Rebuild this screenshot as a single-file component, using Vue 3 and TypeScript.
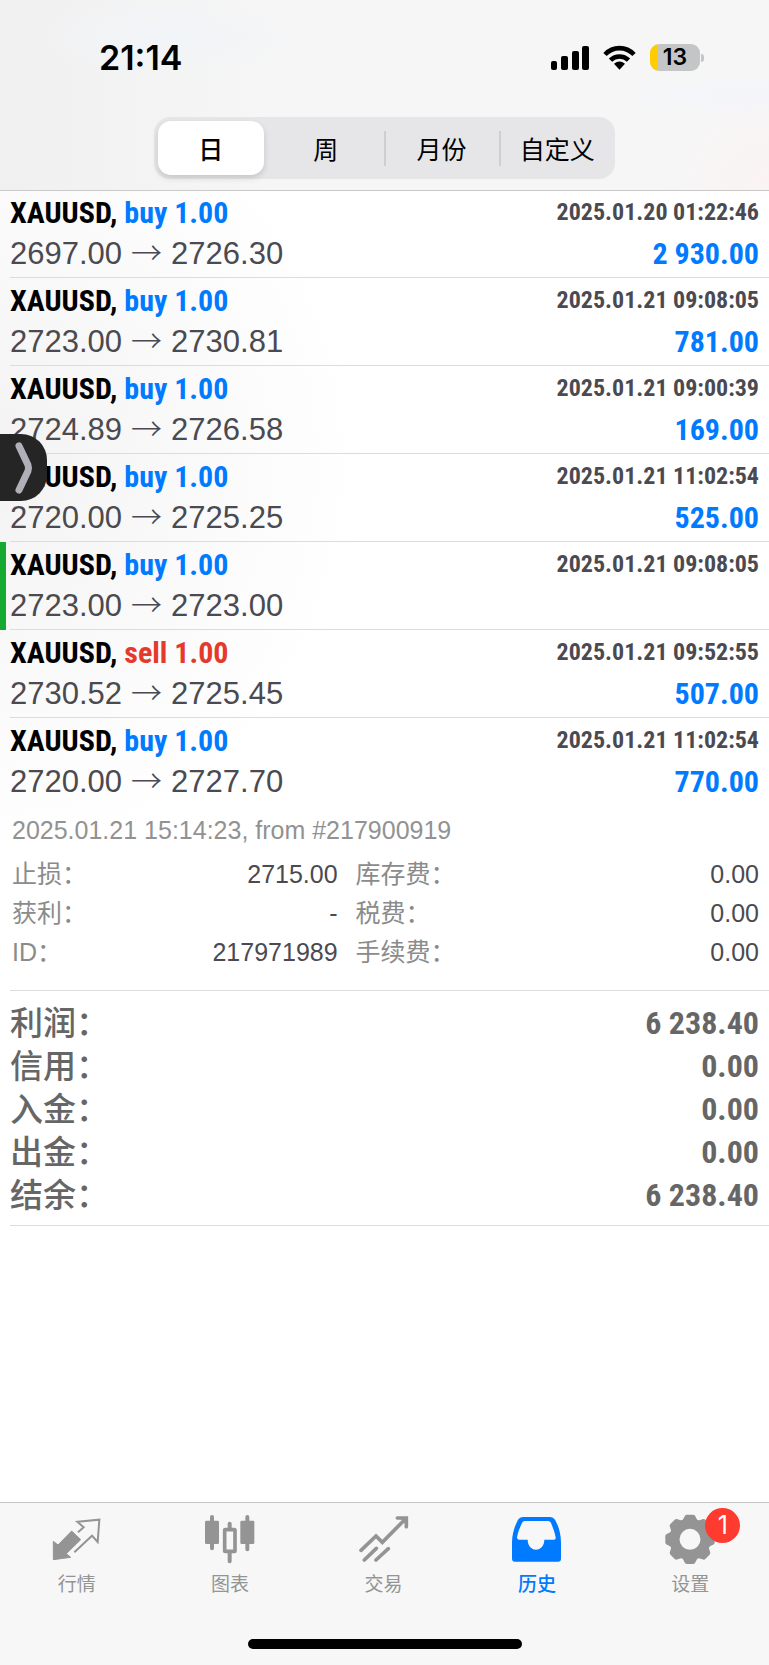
<script setup lang="ts">
import { ref } from 'vue'

interface Deal {
  symbol: string
  side: 'buy' | 'sell'
  volume: string
  open: string
  close: string
  time: string
  profit: string
  takeProfit?: boolean
}

const periods = ['日', '周', '月份', '自定义']
const period = ref('日')

const deals: Deal[] = [
  { symbol: 'XAUUSD', side: 'buy', volume: '1.00', open: '2697.00', close: '2726.30', time: '2025.01.20 01:22:46', profit: '2 930.00' },
  { symbol: 'XAUUSD', side: 'buy', volume: '1.00', open: '2723.00', close: '2730.81', time: '2025.01.21 09:08:05', profit: '781.00' },
  { symbol: 'XAUUSD', side: 'buy', volume: '1.00', open: '2724.89', close: '2726.58', time: '2025.01.21 09:00:39', profit: '169.00' },
  { symbol: 'XAUUSD', side: 'buy', volume: '1.00', open: '2720.00', close: '2725.25', time: '2025.01.21 11:02:54', profit: '525.00' },
  { symbol: 'XAUUSD', side: 'buy', volume: '1.00', open: '2723.00', close: '2723.00', time: '2025.01.21 09:08:05', profit: '', takeProfit: true },
  { symbol: 'XAUUSD', side: 'sell', volume: '1.00', open: '2730.52', close: '2725.45', time: '2025.01.21 09:52:55', profit: '507.00' },
  { symbol: 'XAUUSD', side: 'buy', volume: '1.00', open: '2720.00', close: '2727.70', time: '2025.01.21 11:02:54', profit: '770.00' },
]

const details = [
  ['止损：', '2715.00', '库存费：', '0.00'],
  ['获利：', '-', '税费：', '0.00'],
  ['ID：', '217971989', '手续费：', '0.00'],
]

const totals = [
  ['利润：', '6 238.40'],
  ['信用：', '0.00'],
  ['入金：', '0.00'],
  ['出金：', '0.00'],
  ['结余：', '6 238.40'],
]

const teeth = [0, 45, 90, 135, 180, 225, 270, 315]
</script>

<template>
  <div class="screen">
    <header class="top">
      <div class="status">
        <span class="clock">21:14</span>
        <div class="indicators">
          <svg class="signal" viewBox="0 0 38 24" aria-hidden="true">
            <rect x="0" y="15" width="6" height="9" rx="2" />
            <rect x="10" y="10" width="7" height="14" rx="2" />
            <rect x="21" y="5" width="7" height="19" rx="2" />
            <rect x="31" y="0" width="7" height="24" rx="2" />
          </svg>
          <svg class="wifi" viewBox="0 0 33 25" aria-hidden="true">
            <path d="M2 9.5C10 1 23 1 31 9.500M7.500 15.200C12.500 10.200 20.500 10.200 25.500 15.200" fill="none" stroke="#000" stroke-width="4.600" />
            <path d="M11 18.700Q16.500 14.500 22 18.700L16.500 24.700Z" />
          </svg>
          <div class="battery"><span class="cell">13</span><span class="tip"></span></div>
        </div>
      </div>
      <nav class="segments">
        <button
          v-for="item in periods"
          :key="item"
          type="button"
          class="segment"
          :class="{ active: item === period }"
          @click="period = item"
        >{{ item }}</button>
      </nav>
    </header>

    <main class="content">
      <ul class="deals">
        <li v-for="(deal, i) in deals" :key="i" class="deal" :class="{ marked: deal.takeProfit }">
          <div class="line">
            <span class="title">{{ deal.symbol }}, <span :class="deal.side">{{ deal.side }} {{ deal.volume }}</span></span>
            <time class="time">{{ deal.time }}</time>
          </div>
          <div class="line">
            <span class="prices">{{ deal.open }}<span class="arrow">→</span>{{ deal.close }}</span>
            <span class="profit">{{ deal.profit }}</span>
          </div>
        </li>
      </ul>

      <section class="details">
        <p class="origin">2025.01.21 15:14:23, from #217900919</p>
        <table class="grid">
          <tbody>
            <tr v-for="row in details" :key="row[0]">
              <th scope="row">{{ row[0] }}</th>
              <td class="first">{{ row[1] }}</td>
              <th scope="row">{{ row[2] }}</th>
              <td>{{ row[3] }}</td>
            </tr>
          </tbody>
        </table>
      </section>

      <dl class="totals">
        <div v-for="row in totals" :key="row[0]" class="total">
          <dt>{{ row[0] }}</dt>
          <dd>{{ row[1] }}</dd>
        </div>
      </dl>

      <button type="button" class="handle" aria-label="展开">
        <svg viewBox="0 0 46 67" aria-hidden="true">
          <path d="M19 12L28 31Q29 34 28 37L19 56" fill="none" stroke="#b1b0b9" stroke-width="7" stroke-linecap="round" stroke-linejoin="round" />
        </svg>
      </button>
    </main>

    <footer class="bottom">
      <nav class="tabs">
        <a href="#quotes" class="tab">
          <svg viewBox="0 0 150 150" aria-hidden="true">
            <path d="M4 82L18 93L59 51L86 77L43 119L56 130L4 137Z" stroke="currentColor" stroke-width="3" stroke-linejoin="round" />
            <path d="M78 55L95 40L76 23L142 17L137 84L120 65L67 115" fill="none" stroke="currentColor" stroke-width="6" />
          </svg>
          <span>行情</span>
        </a>
        <a href="#charts" class="tab">
          <svg viewBox="0 0 150 150" aria-hidden="true">
            <rect x="0" y="20" width="42" height="70" rx="4" />
            <rect x="106" y="20" width="42" height="70" rx="4" />
            <path d="M21 9V103M127 9V106M74 29V46M74 118V142" stroke="currentColor" stroke-width="12" stroke-linecap="round" />
            <rect x="59" y="47" width="31" height="65" rx="2" fill="none" stroke="currentColor" stroke-width="11" />
          </svg>
          <span>图表</span>
        </a>
        <a href="#trade" class="tab">
          <svg viewBox="0 0 150 150" aria-hidden="true">
            <path d="M6 109L51 66L70 85L140 14M115 12H142V38M16 138L52 103M51 138L88 104" fill="none" stroke="currentColor" stroke-width="11" stroke-linecap="round" />
            <path d="M122 12H142V32Z" />
          </svg>
          <span>交易</span>
        </a>
        <a href="#history" class="tab current">
          <svg viewBox="0 0 150 150" aria-hidden="true">
            <path fill-rule="evenodd" d="M0 85C0 58 10 32 18 17Q23 9 32 9H115Q124 9 129 17C138 32 147 58 147 85V134Q147 143 138 143H9Q0 143 0 134ZM38 21Q31 21 29 29C23 42 18 54 15 70Q15 77 21 77H47C47 94 58 107 72 107S97 94 97 77H126Q132 77 131 70C128 54 123 42 118 29Q116 21 109 21Z" />
          </svg>
          <span>历史</span>
        </a>
        <a href="#settings" class="tab">
          <span class="badged">
            <svg viewBox="0 0 150 150" aria-hidden="true">
              <circle cx="75" cy="76" r="47" fill="none" stroke="currentColor" stroke-width="31" />
              <path v-for="angle in teeth" :key="angle" d="M50 24L60 5Q62 2 66 2H84Q88 2 90 5L100 24Z" :transform="`rotate(${angle} 75 76)`" />
            </svg>
            <span class="badge">1</span>
          </span>
          <span>设置</span>
        </a>
      </nav>
      <div class="home"></div>
    </footer>
  </div>
</template>

<style>
body {
  margin: 0;
  background: #fff;
}
</style>

<style scoped>
.screen {
  min-height: 100vh;
  display: flex;
  flex-direction: column;
  font-family: "Liberation Sans", "Noto Sans CJK SC", sans-serif;
  color: #4a4a50;
}
.top {
  height: 190px;
  border-bottom: 1px solid #c9c9ca;
  background:
    radial-gradient(circle at 100% 100%, #faf3f3, transparent 110px),
    radial-gradient(ellipse at 100% 50%, #f2f5fa, transparent 180px),
    radial-gradient(ellipse at 22% 20%, #f1f4f8, transparent 150px),
    linear-gradient(90deg, #f0f0f0, #f6f6f6 35%);
}
.status {
  height: 115px;
  display: flex;
  align-items: center;
  justify-content: space-between;
  padding: 0 65px 0 99px;
  box-sizing: border-box;
  color: #000;
  font-family: Inter, sans-serif;
}
.clock {
  font-size: 34px;
  font-weight: 600;
  line-height: 40px;
}
.indicators {
  display: flex;
  align-items: center;
  gap: 14px;
}
.signal {
  width: 38px;
  height: 24px;
}
.wifi {
  width: 33px;
  height: 25px;
}
.battery {
  display: flex;
  align-items: center;
  gap: 1px;
}
.cell {
  width: 50px;
  height: 27px;
  border-radius: 9px;
  background: linear-gradient(90deg, #fc0 7px, #c4c5c7 7px);
  font-size: 23px;
  font-weight: 600;
  line-height: 27px;
  text-align: center;
}
.tip {
  width: 3px;
  height: 8px;
  border-radius: 0 4px 4px 0;
  background: #c4c5c7;
}
.segments {
  width: 60%;
  height: 62px;
  margin: 2px auto 0;
  padding: 4px 0 4px 4px;
  box-sizing: border-box;
  display: flex;
  border-radius: 16px;
  background: #e6e6e8;
}
.segment {
  flex: 1;
  margin: 0;
  padding: 0;
  border: 0;
  background: none;
  color: #000;
  font: 25px "Liberation Sans", "Noto Sans CJK SC", sans-serif;
  white-space: nowrap;
}
.segment:nth-child(n + 3) {
  background: linear-gradient(#cfcfd2, #cfcfd2) left center / 2px 35px no-repeat;
}
.segment.active {
  flex: 0 0 106px;
  margin-right: 4px;
  border-radius: 13px;
  background: #fff;
  box-shadow: 0 3px 6px rgba(0, 0, 0, 0.14);
  font-weight: 500;
}
.content {
  flex: 1;
  position: relative;
  background: radial-gradient(ellipse 360px 400px at 0 270px, #f3f3f3, #fff);
}
.deals {
  margin: 0;
  padding: 0;
  list-style: none;
}
.deal {
  height: 88px;
  padding: 2px 10px 0;
  box-sizing: border-box;
  background: linear-gradient(#dcdcdd, #dcdcdd) 10px 100% / 100% 1px no-repeat;
}
.deal:first-child {
  height: 87px;
  padding-top: 1px;
}
.deal:last-child {
  background: none;
}
.deal.marked {
  background:
    linear-gradient(#16ab30, #16ab30) 0 0 / 6px 100% no-repeat,
    linear-gradient(#dcdcdd, #dcdcdd) 10px 100% / 100% 1px no-repeat;
}
.line {
  height: 41px;
  display: flex;
  align-items: center;
  justify-content: space-between;
  line-height: 41px;
}
.title,
.time,
.profit,
.totals dd {
  font-family: "Liberation Sans Narrow", "Roboto Condensed", "Open Sans Condensed", "Liberation Sans", sans-serif;
  font-weight: 700;
}
.title {
  font-size: 30px;
  color: #000;
}
.buy,
.profit {
  color: #007aff;
}
.sell {
  color: #e53a2b;
}
.time {
  font-size: 24px;
}
.prices {
  font-size: 31px;
}
.arrow {
  margin: 0 9px;
  font: 300 31px/1 "Noto Sans CJK SC", sans-serif;
}
.profit {
  font-size: 30px;
}
.details {
  margin-left: 10px;
  padding: 5px 10px 18px 2px;
  border-bottom: 1px solid #dcdcdd;
  font-size: 25px;
}
.origin {
  margin: 0 0 5px;
  line-height: 39px;
  color: #929292;
}
.grid {
  width: 100%;
  border-collapse: collapse;
  table-layout: fixed;
}
.grid th,
.grid td {
  box-sizing: border-box;
  height: 39px;
  padding: 0;
  line-height: 39px;
}
.grid th {
  width: 15%;
  color: #8b8b8b;
  font-weight: 400;
  text-align: left;
  white-space: nowrap;
}
.grid td {
  text-align: right;
}
.grid .first {
  width: 31%;
  padding-right: 18px;
}
.totals {
  margin: 0 0 0 10px;
  padding: 11px 10px 8px 0;
  border-bottom: 1px solid #dcdcdd;
  color: #666;
}
.total {
  height: 43px;
  display: flex;
  align-items: center;
  justify-content: space-between;
  line-height: 43px;
}
.totals dt {
  font-size: 33px;
  font-weight: 500;
}
.totals dd {
  margin: 0;
  font-size: 32px;
}
.handle {
  position: absolute;
  top: 243px;
  left: 0;
  width: 47px;
  height: 67px;
  padding: 0;
  border: 0;
  border-radius: 0 26px 26px 0;
  background: #252525;
}
.handle svg {
  display: block;
  width: 46px;
  height: 67px;
}
.bottom {
  height: 163px;
  box-sizing: border-box;
  padding-top: 11px;
  border-top: 1px solid #c4c4c4;
  background: #f7f7f7;
}
.tabs {
  display: flex;
  padding-right: 2px;
}
.tab {
  flex: 1;
  display: flex;
  flex-direction: column;
  align-items: center;
  gap: 7px;
  color: #949494;
  font: 19px/28px "Liberation Sans", "Noto Sans CJK SC", sans-serif;
  text-decoration: none;
}
.tab.current {
  color: #007aff;
  font-weight: 500;
}
.tab svg {
  display: block;
  width: 50px;
  height: 50px;
  fill: currentColor;
}
.badged {
  position: relative;
}
.badge {
  position: absolute;
  top: -6px;
  left: 40px;
  width: 35px;
  height: 35px;
  border-radius: 50%;
  background: #ff3b30;
  color: #fff;
  font: 25px/35px Inter, sans-serif;
  text-align: center;
}
.home {
  width: 274px;
  height: 10px;
  margin: 40px auto 0;
  border-radius: 5px;
  background: #000;
}
</style>
